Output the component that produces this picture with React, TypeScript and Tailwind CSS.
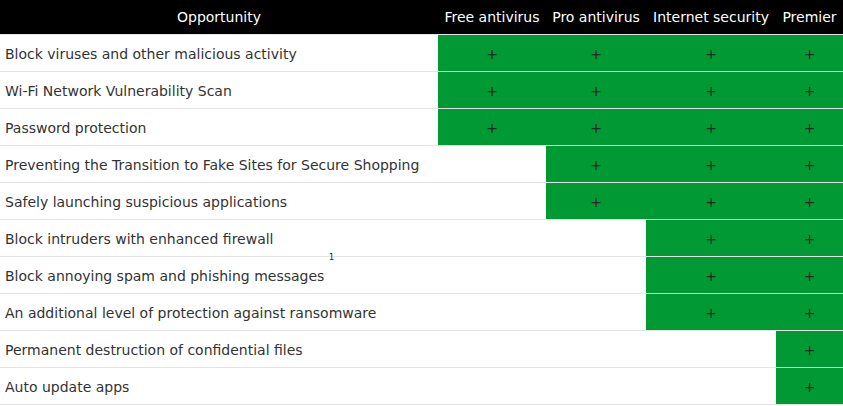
const columns = ["Free antivirus", "Pro antivirus", "Internet security", "Premier"];

// from = index of the first column that has the feature
const features = [
  { name: "Block viruses and other malicious activity", from: 0 },
  { name: "Wi-Fi Network Vulnerability Scan", from: 0 },
  { name: "Password protection", from: 0 },
  { name: "Preventing the Transition to Fake Sites for Secure Shopping", from: 1 },
  { name: "Safely launching suspicious applications", from: 1 },
  { name: "Block intruders with enhanced firewall", from: 2 },
  { name: "Block annoying spam and phishing messages", from: 2, note: "1" },
  { name: "An additional level of protection against ransomware", from: 2 },
  { name: "Permanent destruction of confidential files", from: 3 },
  { name: "Auto update apps", from: 3 },
];

const grid = "grid grid-cols-[438px_108px_100px_130px_67px]";

export default function App() {
  return (
    <div
      className="w-[843px] h-[406px] bg-white text-[14px] text-[#333]"
      style={{ fontFamily: '"DejaVu Sans", sans-serif' }}
    >
      <div className={`${grid} h-[35px] bg-black text-white border-b border-[#e6e6e6]`}>
        <div className="flex items-center justify-center">Opportunity</div>
        {columns.map((c) => (
          <div key={c} className="flex items-center justify-center whitespace-nowrap">
            {c}
          </div>
        ))}
      </div>

      {features.map((f) => (
        <div key={f.name} className={`${grid} h-[37px] border-b border-[#e3e3e3]`}>
          <div className="relative flex items-center px-[5px] pt-[3px] whitespace-nowrap">
            {f.name}
            {f.note && (
              <span className="absolute left-[329px] top-[-3px] text-[8px] leading-none text-[#222]">
                {f.note}
              </span>
            )}
          </div>
          {columns.map((c, i) => (
            <div
              key={c}
              className={
                i >= f.from
                  ? "flex items-center justify-center pt-[3px] bg-[#009933] text-[#1f2a22]"
                  : "bg-white"
              }
            >
              {i >= f.from ? "+" : null}
            </div>
          ))}
        </div>
      ))}
    </div>
  );
}
